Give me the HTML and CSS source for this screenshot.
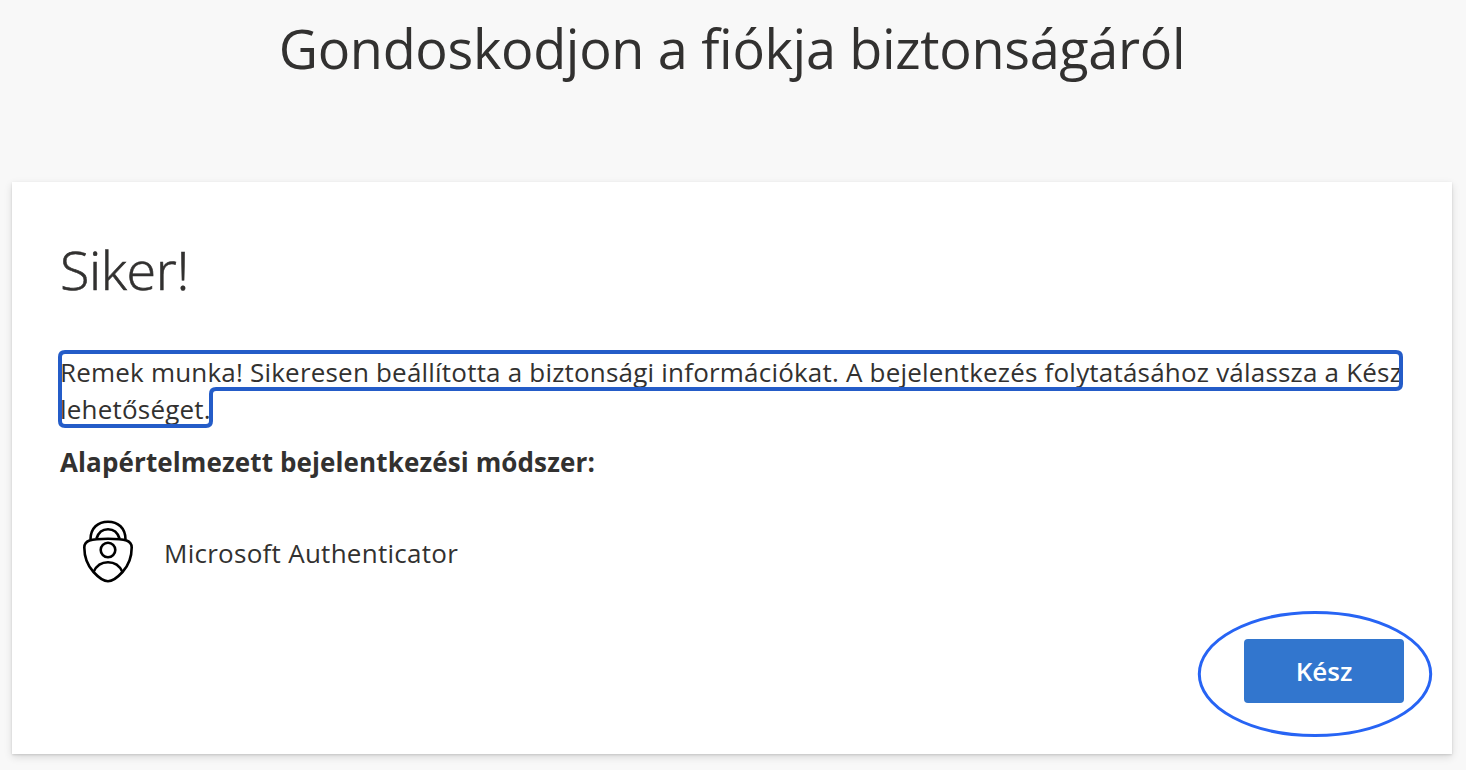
FILE: index.html
```html
<!DOCTYPE html>
<html lang="hu">
<head>
<meta charset="utf-8">
<title>Gondoskodjon a fiókja biztonságáról</title>
<link rel="stylesheet" href="styles.css">
</head>
<body>
<h1 class="page-title"><span>Gondoskodjon a fiókja biztonságáról</span></h1>
<main class="card">
  <h2 class="card-title"><span>Siker!</span></h2>
  <div class="message">
    <p class="message-text"><span class="line-one">Remek munka! Sikeresen beállította a biztonsági információkat. A bejelentkezés folytatásához válassza a Kész</span> <span class="line-two">lehetőséget.</span></p>
    <svg class="focus-ring" width="1346" height="80" viewBox="0 0 1346 80" aria-hidden="true">
      <path d="M7 2H1338Q1343 2 1343 7V34Q1343 39 1338 39H158Q153 39 153 44V71Q153 76 148 76H7Q2 76 2 71V7Q2 2 7 2Z"/>
    </svg>
  </div>
  <p class="method-label"><span>Alapértelmezett bejelentkezési módszer:</span></p>
  <div class="method">
    <svg class="method-icon" width="52" height="64" viewBox="0 0 52 64" aria-hidden="true">
      <path d="M8.500 19.500C8.500 8 16 1.700 26 1.700S43.500 8 43.500 19.500"/>
      <path d="M14.500 18.500C16.500 12 20.500 9.200 26 9.200S35.500 12 37.500 18.500"/>
      <path d="M26 18.800C19 18.800 12 19 7.500 20.500C4 21.800 2.300 24 2.300 27.500C2.300 37 5.500 45.500 11.500 52C17 58 21.500 61.300 26 61.300S35 58 40.500 52C46.500 45.500 49.700 37 49.700 27.500C49.700 24 48 21.800 44.500 20.500C40 19 33 18.800 26 18.800Z"/>
      <circle cx="26" cy="30" r="7.300"/>
      <path d="M11.500 52C14.500 45.500 19.500 42.300 26 42.300S37.500 45.500 40.500 52"/>
    </svg>
    <span class="method-name">Microsoft Authenticator</span>
  </div>
  <div class="actions">
    <button class="done" type="button">Kész</button>
    <svg class="highlight" width="236" height="128" viewBox="0 0 236 128" aria-hidden="true">
      <ellipse cx="118" cy="64" rx="115.700" ry="61.500"/>
    </svg>
  </div>
</main>
</body>
</html>
```
FILE: styles.css
```css
* { box-sizing: border-box; }
body {
  margin: 0;
  height: 770px;
  overflow: hidden;
  padding: 11px 14px 16px 12px;
  background: #f8f8f8;
  color: #323130;
  font-family: "Open Sans", "Noto Sans", sans-serif;
  display: flex;
  flex-direction: column;
}
h1, h2, p { margin: 0; }
.page-title {
  height: 171px;
  font-size: 54px;
  font-weight: 400;
  line-height: 74px;
  letter-spacing: -.32px;
  text-align: center;
  white-space: nowrap;
}
.card {
  height: 572px;
  padding: 51px 48px;
  background: #fff;
  box-shadow: 0 3px 8px rgba(0, 0, 0, .13), 0 1px 2px rgba(0, 0, 0, .12);
}
.card-title {
  height: 117px;
  font-size: 54px;
  font-weight: 300;
  line-height: 72px;
  letter-spacing: -.4px;
  -webkit-text-stroke: .6px #323130;
}
.message { position: relative; height: 92px; }
.message-text {
  padding-top: 4px;
  font-size: 26px;
  line-height: 37px;
  white-space: nowrap;
  letter-spacing: .2px;
}
.line-one, .line-two { display: block; width: max-content; }
.focus-ring {
  position: absolute;
  left: -2px;
  top: 0;
  fill: none;
  stroke: #245cc8;
  stroke-width: 4;
}
.method-label {
  height: 78px;
  font-size: 26px;
  font-weight: 700;
  line-height: 40px;
  letter-spacing: .12px;
}
.method {
  height: 64px;
  padding-left: 22px;
  display: flex;
  align-items: center;
  gap: 30px;
}
.method-icon { fill: none; stroke: #000; stroke-width: 2.600; }
.method-name { font-size: 26px; line-height: 40px; letter-spacing: .27px; padding-top: 1px; }
.actions {
  position: relative;
  display: flex;
  justify-content: flex-end;
  padding-top: 55px;
}
.done {
  width: 160px;
  height: 64px;
  padding: 0;
  border: 0;
  border-radius: 4px;
  background: #3276ce;
  color: #fff;
  font: 600 26px/64px "Open Sans", "Noto Sans", sans-serif;
}
.highlight {
  position: absolute;
  right: -29px;
  top: 26px;
  fill: none;
  stroke: #2764f4;
  stroke-width: 3;
  pointer-events: none;
}
```
